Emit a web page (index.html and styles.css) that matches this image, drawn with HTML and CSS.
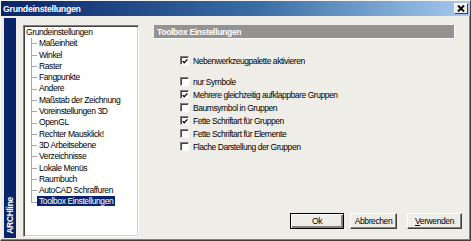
FILE: index.html
```html
<!DOCTYPE html>
<html lang="de">
<head>
<meta charset="utf-8">
<title>Grundeinstellungen</title>
<link rel="stylesheet" href="styles.css">
</head>
<body>
<div class="dialog">
  <div class="titlebar">
    <span class="title">Grundeinstellungen</span>
    <span class="close"><svg width="8" height="7" viewBox="0 0 8 7"><path d="M1 0.5 L7 6.5 M7 0.5 L1 6.5" stroke="#000" stroke-width="1.8"/></svg></span>
  </div>
  <div class="main">
    <div class="brand"><span class="brand-text">ARCHline</span></div>
    <div class="tree">
      <div class="root">Grundeinstellungen</div>
      <ul class="children">
        <li><span>Maßeinheit</span></li>
        <li><span>Winkel</span></li>
        <li><span>Raster</span></li>
        <li><span>Fangpunkte</span></li>
        <li><span>Andere</span></li>
        <li><span>Maßstab der Zeichnung</span></li>
        <li><span>Voreinstellungen 3D</span></li>
        <li><span>OpenGL</span></li>
        <li><span>Rechter Mausklick!</span></li>
        <li><span>3D Arbeitsebene</span></li>
        <li><span>Verzeichnisse</span></li>
        <li><span>Lokale Menüs</span></li>
        <li><span>Raumbuch</span></li>
        <li><span>AutoCAD Schraffuren</span></li>
        <li class="last"><span class="sel">Toolbox Einstellungen</span></li>
      </ul>
    </div>
    <div class="panel">
      <div class="header">Toolbox Einstellungen</div>
      <div class="options">
        <div class="opt first"><span class="cb"><svg width="7" height="7" viewBox="0 0 7 7"><path d="M0.8 3 L2.6 5 L6.3 1" fill="none" stroke="#000" stroke-width="1.5"/></svg></span>Nebenwerkzeugpalette aktivieren</div>
        <div class="opt second"><span class="cb"></span>nur Symbole</div>
        <div class="opt"><span class="cb"><svg width="7" height="7" viewBox="0 0 7 7"><path d="M0.8 3 L2.6 5 L6.3 1" fill="none" stroke="#000" stroke-width="1.5"/></svg></span>Mehrere gleichzeitig aufklappbare Gruppen</div>
        <div class="opt"><span class="cb"></span>Baumsymbol in Gruppen</div>
        <div class="opt"><span class="cb"><svg width="7" height="7" viewBox="0 0 7 7"><path d="M0.8 3 L2.6 5 L6.3 1" fill="none" stroke="#000" stroke-width="1.5"/></svg></span>Fette Schriftart für Gruppen</div>
        <div class="opt"><span class="cb"></span>Fette Schriftart für Elemente</div>
        <div class="opt"><span class="cb"></span>Flache Darstellung der Gruppen</div>
      </div>
      <div class="buttons">
        <button class="btn default" type="button">Ok</button>
        <button class="btn cancel" type="button">Abbrechen</button>
        <button class="btn apply" type="button"><u>V</u>erwenden</button>
      </div>
    </div>
  </div>
</div>
</body>
</html>
```
FILE: styles.css
```css
* { box-sizing: border-box; }
html, body { margin: 0; padding: 0; }
body {
  width: 471px;
  height: 241px;
  overflow: hidden;
  background: #ecebe5;
  font-family: "Liberation Sans", Arial, sans-serif;
  font-size: 8.5px;
  color: #000;
}
.dialog {
  width: 471px;
  height: 241px;
  display: flex;
  flex-direction: column;
  background: #eeede8;
  border-top: 1px solid #f4f3ee;
  border-left: 1px solid #f4f3ee;
  border-right: 1px solid #404040;
  border-bottom: 1px solid #404040;
  box-shadow: inset -1px -1px 0 #808080;
}
.titlebar {
  height: 15px;
  flex: none;
  display: flex;
  align-items: center;
  justify-content: space-between;
  padding: 0 2px 0 2px;
  background: linear-gradient(to right, #0a246a 0%, #3a6ea5 55%, #a6caf0 100%);
}
.title {
  color: #fff;
  font-weight: bold;
  font-size: 8.8px;
  letter-spacing: -0.3px;
}
.close {
  width: 14px;
  height: 11px;
  display: flex;
  align-items: center;
  justify-content: center;
  background: #eeede8;
  border-top: 1px solid #fff;
  border-left: 1px solid #fff;
  border-right: 1px solid #404040;
  border-bottom: 1px solid #404040;
}
.main {
  flex: 1;
  display: flex;
  padding: 2px 0 2px 3px;
  min-height: 0;
}
.brand {
  width: 12px;
  flex: none;
  background: #0a246a;
  display: flex;
  flex-direction: column;
  justify-content: flex-end;
  align-items: center;
  padding-bottom: 4px;
}
.brand-text {
  writing-mode: vertical-rl;
  transform: rotate(180deg);
  color: #fff;
  font-weight: bold;
  font-size: 8.5px;
  letter-spacing: -0.3px;
  line-height: 12px;
}
.tree {
  width: 116px;
  flex: none;
  margin: 7px 0 1px 7px;
  background: #fff;
  border-top: 1px solid #808080;
  border-left: 1px solid #808080;
  border-right: 1px solid #fff;
  border-bottom: 1px solid #fff;
  box-shadow: inset 1px 1px 0 #404040, inset -1px -1px 0 #d4d0c8;
  padding: 1px 0 0 2px;
  letter-spacing: -0.4px;
  line-height: 11.3px;
}
.root { height: 11.3px; white-space: nowrap; }
.children {
  list-style: none;
  margin: 0 0 0 5px;
  padding: 0;
}
.children li {
  height: 11.3px;
  padding-left: 6px;
  white-space: nowrap;
  background:
    linear-gradient(#a8a8a8, #a8a8a8) 0 0 / 1px 100% no-repeat,
    linear-gradient(#a8a8a8, #a8a8a8) 0 50% / 6px 1px no-repeat;
}
.children li.last {
  background:
    linear-gradient(#a8a8a8, #a8a8a8) 0 0 / 1px 50% no-repeat,
    linear-gradient(#a8a8a8, #a8a8a8) 0 50% / 6px 1px no-repeat;
}
.children li span {
  display: inline-block;
  padding: 0 2px;
  line-height: 10px;
}
.children li span.sel {
  background: #0a246a;
  color: #fff;
}
.panel {
  flex: 1;
  display: flex;
  flex-direction: column;
  padding: 7px 8px 9px 15px;
}
.header {
  height: 14px;
  margin-right: 7px;
  background: #939393;
  color: #fff;
  font-weight: bold;
  font-size: 8.5px;
  letter-spacing: -0.3px;
  line-height: 14px;
  padding-left: 3px;
  border-right: 1px solid #fbfbf8;
  border-bottom: 1px solid #fbfbf8;
}
.options {
  padding-left: 26px;
  margin-top: 15px;
  letter-spacing: -0.45px;
}
.opt {
  height: 13px;
  display: flex;
  align-items: center;
  white-space: nowrap;
}
.opt.second { margin-top: 8px; }
.cb {
  width: 9px;
  height: 9px;
  flex: none;
  margin-right: 4px;
  background: #fff;
  border-top: 1px solid #808080;
  border-left: 1px solid #808080;
  border-right: 1px solid #fff;
  border-bottom: 1px solid #fff;
  box-shadow: inset 1px 1px 0 #404040;
  display: flex;
  align-items: center;
  justify-content: center;
}
.cb svg { display: block; margin: 1px 0 0 1px; }
.buttons {
  margin-top: auto;
  display: flex;
  justify-content: flex-end;
  gap: 6px;
}
.btn {
  height: 16px;
  padding: 0;
  margin: 0;
  font-family: "Liberation Sans", Arial, sans-serif;
  font-size: 8.5px;
  letter-spacing: -0.4px;
  color: #000;
  background: #eeede8;
  border-top: 1px solid #fff;
  border-left: 1px solid #fff;
  border-right: 1px solid #404040;
  border-bottom: 1px solid #404040;
  box-shadow: inset -1px -1px 0 #808080;
  border-radius: 0;
}
.btn.default {
  width: 54px;
  border: 1px solid #000;
  box-shadow: inset 1px 1px 0 #fff, inset -2px -2px 0 #808080;
}
.btn.cancel { width: 47px; }
.btn.apply { width: 55px; margin-left: 4px; }
.btn u { text-decoration: underline; }
```
